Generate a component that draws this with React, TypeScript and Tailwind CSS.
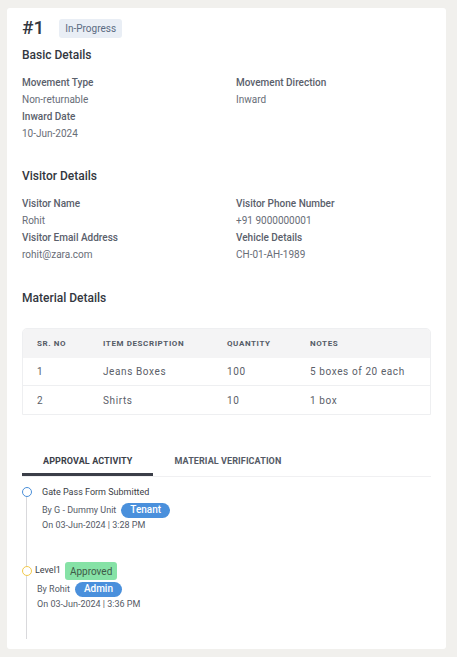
import React from "react";

const Field = ({ label, value }: { label: string; value: string }) => (
  <div className="flex flex-col">
    <div className="text-[10px] leading-[17px] font-medium text-[#5a606b]">{label}</div>
    <div className="text-[10px] leading-[17px] text-[#686d77]">{value}</div>
  </div>
);

const Title = ({ children, className }: { children: React.ReactNode; className: string }) => (
  <div className={`text-[12px] leading-[18px] font-medium text-[#333740] ${className}`}>{children}</div>
);

export default function App() {
  const rows = [
    ["1", "Jeans Boxes", "100", "5 boxes of 20 each"],
    ["2", "Shirts", "10", "1 box"],
  ];
  return (
    <div className="min-h-[657px] w-[457px] bg-[#f1f0ed] pt-[8px] pl-[7px] pr-[11px] pb-[8px]" style={{ fontFamily: "Roboto, 'Liberation Sans', sans-serif" }}>
      <div className="bg-white rounded-[3px] h-[641px] pl-[15px] pr-[15px] pt-[5px]">
        <div className="flex items-center gap-[15px] h-[30px]">
          <div className="text-[19px] font-medium text-[#333740]">#1</div>
          <div className="bg-[#e9eef5] rounded-[3px] px-[6px] h-[19px] flex items-center text-[10px] text-[#5b6b82]">In-Progress</div>
        </div>
        <Title className="mt-[3px]">Basic Details</Title>
        <div className="mt-[10px] grid grid-cols-[214px_1fr]">
          <div>
            <Field label="Movement Type" value="Non-returnable" />
            <Field label="Inward Date" value="10-Jun-2024" />
          </div>
          <div>
            <Field label="Movement Direction" value="Inward" />
          </div>
        </div>

        <Title className="mt-[25px]">Visitor Details</Title>
        <div className="mt-[10px] grid grid-cols-[214px_1fr]">
          <div>
            <Field label="Visitor Name" value="Rohit" />
            <Field label="Visitor Email Address" value="rohit@zara.com" />
          </div>
          <div>
            <Field label="Visitor Phone Number" value="+91 9000000001" />
            <Field label="Vehicle Details" value="CH-01-AH-1989" />
          </div>
        </div>

        <Title className="mt-[26px]">Material Details</Title>

        <div className="mt-[21px] w-[409px] border border-[#eeeff1] rounded-t-[5px] overflow-hidden">
          <div className="grid grid-cols-[66px_124px_83px_1fr] h-[29px] bg-[#f4f4f5] items-center text-[8px] font-bold tracking-[0.6px] text-[#555b66]">
            <div className="pl-[14px]">SR. NO</div>
            <div className="pl-[14px]">ITEM DESCRIPTION</div>
            <div className="pl-[14px]">QUANTITY</div>
            <div className="pl-[14px]">NOTES</div>
          </div>
          {rows.map((r, i) => (
            <div key={i} className={`grid grid-cols-[66px_124px_83px_1fr] h-[28px] items-center text-[10px] tracking-[0.6px] text-[#5b6069] ${i === 0 ? "border-b border-[#eeeff1]" : ""}`}>
              <div className="pl-[14px]">{r[0]}</div>
              <div className="pl-[14px]">{r[1]}</div>
              <div className="pl-[14px]">{r[2]}</div>
              <div className="pl-[14px]">{r[3]}</div>
            </div>
          ))}
        </div>

        <div className="mt-[40px] flex border-b border-[#f0f0f2] w-[409px]">
          <div className="px-[21px] leading-[12px] pb-[6px] border-b-[3px] border-[#3b3e48] text-[9px] font-bold text-[#3b3e48] tracking-[0.1px]">APPROVAL ACTIVITY</div>
          <div className="px-[21px] leading-[12px] pb-[6px] text-[9px] font-bold text-[#555a66] tracking-[0.1px]">MATERIAL VERIFICATION</div>
        </div>

        <div className="relative mt-[7px]">
          <div className="absolute left-[4px] top-[8px] w-[1px] h-[147px] bg-[#d9d9dc]" />
          <div className="relative flex">
            <div className="w-[10px] h-[10px] rounded-full border-[1.5px] border-[#4a8fd9] bg-white mt-[3px]" />
            <div className="ml-[10px]">
              <div className="text-[9px] leading-[16px] text-[#3a3d45]">Gate Pass Form Submitted</div>
              <div className="mt-[2px] flex items-center gap-[5px] text-[9px] leading-[16px] text-[#555a66]">
                <span>By G - Dummy Unit</span>
                <span className="bg-[#4a90dc] text-white rounded-full px-[9px] h-[15px] flex items-center text-[10px] font-medium">Tenant</span>
              </div>
              <div className="text-[9px] leading-[14px] text-[#555a66]">On 03-Jun-2024 | 3:28 PM</div>
            </div>
          </div>

          <div className="relative flex mt-[30px] items-center">
            <div className="w-[10px] h-[10px] rounded-full border-[1.5px] border-[#f2c94c] bg-white" />
            <div className="ml-[3px] text-[9px] text-[#3a3d45]">Level1</div>
            <div className="ml-[4px] bg-[#86e2a6] rounded-[3px] px-[5px] h-[18px] flex items-center text-[10px] text-[#3f5b48]">Approved</div>
          </div>
          <div className="pl-[15px] mt-[1px]">
            <div className="flex items-center gap-[5px] text-[9px] leading-[16px] text-[#555a66]">
              <span>By Rohit</span>
              <span className="bg-[#4a90dc] text-white rounded-full px-[9px] h-[15px] flex items-center text-[10px] font-medium">Admin</span>
            </div>
            <div className="text-[9px] leading-[14px] text-[#555a66]">On 03-Jun-2024 | 3:36 PM</div>
          </div>
        </div>
      </div>
    </div>
  );
}
